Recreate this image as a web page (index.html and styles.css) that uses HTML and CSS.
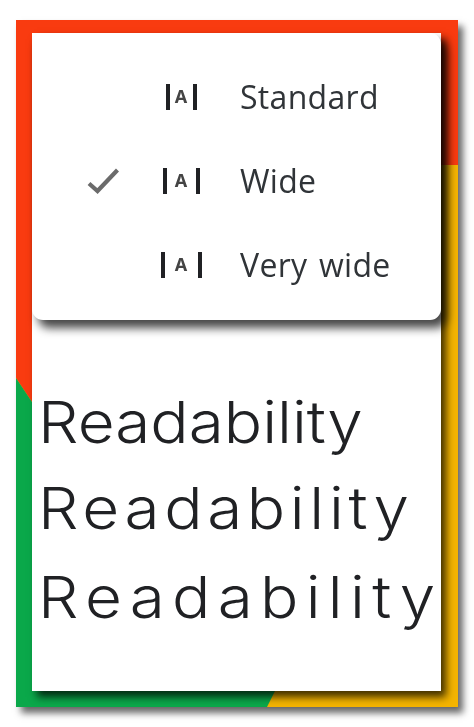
FILE: index.html
```html
<!DOCTYPE html>
<html lang="en">
<head>
<meta charset="utf-8">
<title>Readability</title>
<link rel="stylesheet" href="styles.css">
</head>
<body>
<div class="frame">
  <main class="panel">
    <div class="menu">
      <div class="row">
        <span class="check"></span>
        <span class="icon icon-standard"><i class="bar"></i><b class="glyph">A</b><i class="bar"></i></span>
        <span class="label">Standard</span>
      </div>
      <div class="row">
        <span class="check">
          <svg viewBox="0 0 32 26" width="32" height="26"><path d="M2 15.5 L10.5 23 L30.5 2" fill="none" stroke="#6b6b6b" stroke-width="4.2"/></svg>
        </span>
        <span class="icon icon-wide"><i class="bar"></i><b class="glyph">A</b><i class="bar"></i></span>
        <span class="label">Wide</span>
      </div>
      <div class="row">
        <span class="check"></span>
        <span class="icon icon-verywide"><i class="bar"></i><b class="glyph">A</b><i class="bar"></i></span>
        <span class="label">Very wide</span>
      </div>
    </div>
    <div class="samples">
      <p class="sample s1">Readability</p>
      <p class="sample s2">Readability</p>
      <p class="sample s3">Readability</p>
    </div>
  </main>
</div>
</body>
</html>
```
FILE: styles.css
```css
* { box-sizing: border-box; }
html, body { margin: 0; background: #fff; }
body { width: 474px; height: 727px; padding: 20px 16px; overflow: hidden; }

.frame {
  position: relative;
  width: 442px;
  height: 687px;
  padding: 13px 17px 16px 16px;
  background: #f4b400;
  box-shadow: 5px 6px 7px rgba(0, 0, 0, .6);
  filter: blur(.4px);
}
.frame::before, .frame::after { content: ""; position: absolute; inset: 0; }
.frame::before {
  background: #f93b10;
  clip-path: polygon(0 0, 442px 0, 442px 145px, 200px 145px, 16px 382px, 0 358px);
}
.frame::after {
  background: #0aa84a;
  clip-path: polygon(0 358px, 16px 382px, 259px 671px, 251px 687px, 0 687px);
}

.panel {
  position: relative;
  z-index: 1;
  height: 658px;
  background: #fff;
  box-shadow: 5px 6px 8px rgba(0, 0, 0, .75);
}

.menu {
  position: relative;
  height: 287px;
  padding: 22px 0 13px;
  background: #fff;
  border-radius: 11px;
  box-shadow: 6px 8px 10px rgba(0, 0, 0, .72);
}
.row { display: flex; align-items: center; height: 84px; }
.check { width: 56px; flex: none; display: flex; justify-content: flex-end; }
.check svg { display: block; margin-right: -31px; }
.icon {
  flex: none;
  width: 152px;
  height: 26px;
  padding-left: 34px;
  display: flex;
  justify-content: center;
  align-items: stretch;
  color: #202124;
}
.bar { display: block; width: 4px; background: #202124; }
.glyph {
  font: 700 18px/25px "Noto Sans", sans-serif;
  color: #444;
  width: 15px;
  text-align: center;
}
.icon-standard .glyph { margin: 0 4px; }
.icon-wide .glyph { margin: 0 7px; }
.icon-verywide .glyph { margin: 0 9px; }
.label {
  font: 400 32px/40px "Open Sans", sans-serif;
  letter-spacing: .3px;
  word-spacing: 3px;
  color: #303438;
}

.samples { padding: 0 0 0 6px; }
.sample {
  margin: 0;
  font-family: Inter, sans-serif;
  font-weight: 350;
  font-size: 58px;
  line-height: 86px;
  color: #202124;
  white-space: nowrap;
  transform: scaleX(1.1);
  transform-origin: left center;
}
.s1 { margin-top: 59px; letter-spacing: 0; }
.s2 { letter-spacing: 4.2px; }
.s3 { margin-top: 3px; letter-spacing: 6.6px; }
```
